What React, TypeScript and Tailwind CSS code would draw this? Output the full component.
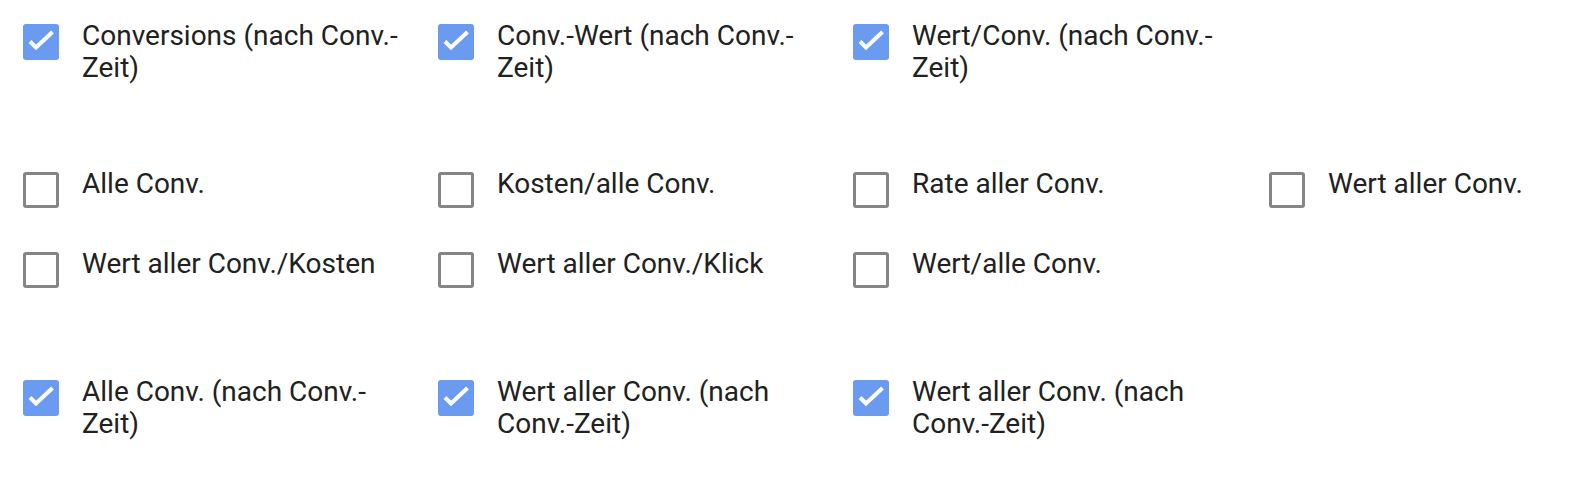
import React from "react";

type Item = { label: string; checked: boolean } | null;

const CheckBox = ({ checked }: { checked: boolean }) =>
  checked ? (
    <div className="w-[36px] h-[36px] shrink-0 rounded-[3px] bg-[#6a9bf0] flex items-center justify-center">
      <svg width="36" height="36" viewBox="0 0 36 36">
        <polyline points="7,17.5 13,23.5 29.5,8" fill="none" stroke="#ffffff" strokeWidth="4" strokeLinecap="butt" strokeLinejoin="miter" />
      </svg>
    </div>
  ) : (
    <div className="w-[36px] h-[36px] shrink-0 rounded-[3px] border-[3px] border-[#858585] bg-white" />
  );

const Cell = ({ item }: { item: Item }) => {
  if (!item) return <div />;
  return (
    <div className="flex items-start gap-[23px]">
      <CheckBox checked={item.checked} />
      <div className="mt-[-4px] w-[335px] text-[28px] leading-[32px] text-[#212121]">{item.label}</div>
    </div>
  );
};

const groups: { rows: Item[][]; className: string }[] = [
  {
    className: "",
    rows: [
      [
        { label: "Conversions (nach Conv.-Zeit)", checked: true },
        { label: "Conv.-Wert (nach Conv.-Zeit)", checked: true },
        { label: "Wert/Conv. (nach Conv.-Zeit)", checked: true },
        null,
      ],
    ],
  },
  {
    className: "mt-[88px] gap-y-[44px]",
    rows: [
      [
        { label: "Alle Conv.", checked: false },
        { label: "Kosten/alle Conv.", checked: false },
        { label: "Rate aller Conv.", checked: false },
        { label: "Wert aller Conv.", checked: false },
      ],
      [
        { label: "Wert aller Conv./Kosten", checked: false },
        { label: "Wert aller Conv./Klick", checked: false },
        { label: "Wert/alle Conv.", checked: false },
        null,
      ],
    ],
  },
  {
    className: "mt-[92px]",
    rows: [
      [
        { label: "Alle Conv. (nach Conv.-Zeit)", checked: true },
        { label: "Wert aller Conv. (nach Conv.-Zeit)", checked: true },
        { label: "Wert aller Conv. (nach Conv.-Zeit)", checked: true },
        null,
      ],
    ],
  },
];

export default function App() {
  return (
    <div className="w-[1570px] h-[496px] bg-white overflow-hidden pl-[23px] pt-[24px] font-['Roboto',sans-serif]">
      {groups.map((g, gi) => (
        <div key={gi} className={`grid grid-cols-[415px_415px_416px_300px] ${g.className}`}>
          {g.rows.flat().map((it, i) => (
            <Cell key={i} item={it} />
          ))}
        </div>
      ))}
    </div>
  );
}
